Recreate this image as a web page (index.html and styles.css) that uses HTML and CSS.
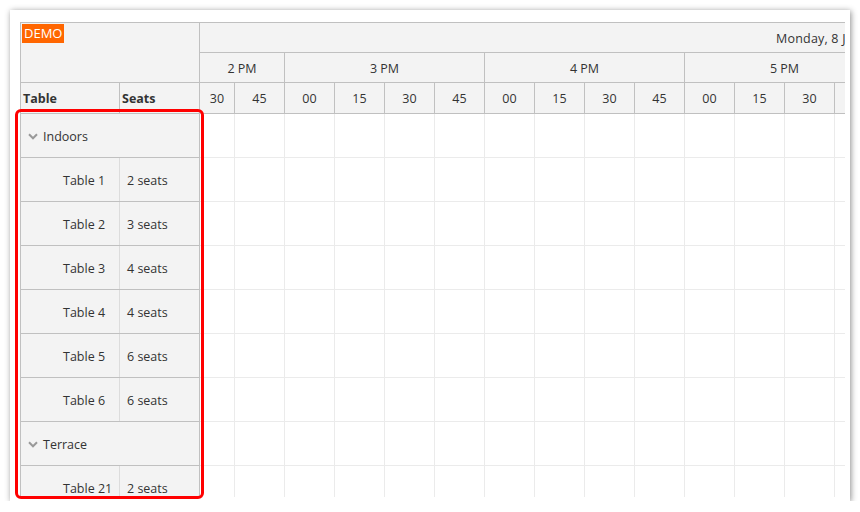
FILE: index.html
```html
<!DOCTYPE html>
<html>
<head>
<meta charset="utf-8">
<link rel="stylesheet" href="styles.css">
</head>
<body>
<div class="panel">
  <div class="scheduler">
    <div class="head">
      <div class="corner">
        <div class="corner-top"><span class="demo">DEMO</span></div>
        <div class="corner-cols">
          <div class="col-table">Table</div>
          <div class="col-seats">Seats</div>
        </div>
      </div>
      <div class="timeheader">
        <div class="date-row"><span class="date">Monday, 8 June 2020</span></div>
        <div class="hour-row">
          <div class="hour first">2 PM</div>
          <div class="hour">3 PM</div>
          <div class="hour">4 PM</div>
          <div class="hour">5 PM</div>
        </div>
        <div class="min-row">
          <div class="min first">30</div><div class="min">45</div>
          <div class="min">00</div><div class="min">15</div><div class="min">30</div><div class="min">45</div>
          <div class="min">00</div><div class="min">15</div><div class="min">30</div><div class="min">45</div>
          <div class="min">00</div><div class="min">15</div><div class="min">30</div><div class="min">45</div>
        </div>
      </div>
    </div>
    <div class="body">
      <div class="rowheaders">
        <div class="rh group"><svg class="chev" width="10" height="7" viewBox="0 0 10 7"><path d="M1 1.3 L5 5.3 L9 1.3" fill="none" stroke="#999" stroke-width="2"/></svg>Indoors</div>
        <div class="rh"><div class="c-table">Table 1</div><div class="c-seats">2 seats</div></div>
        <div class="rh"><div class="c-table">Table 2</div><div class="c-seats">3 seats</div></div>
        <div class="rh"><div class="c-table">Table 3</div><div class="c-seats">4 seats</div></div>
        <div class="rh"><div class="c-table">Table 4</div><div class="c-seats">4 seats</div></div>
        <div class="rh"><div class="c-table">Table 5</div><div class="c-seats">6 seats</div></div>
        <div class="rh"><div class="c-table">Table 6</div><div class="c-seats">6 seats</div></div>
        <div class="rh group"><svg class="chev" width="10" height="7" viewBox="0 0 10 7"><path d="M1 1.3 L5 5.3 L9 1.3" fill="none" stroke="#999" stroke-width="2"/></svg>Terrace</div>
        <div class="rh"><div class="c-table">Table 21</div><div class="c-seats">2 seats</div></div>
      </div>
      <div class="grid">
        <div class="grow"><div class="cell first"></div><div class="cell"></div><div class="cell"></div><div class="cell"></div><div class="cell"></div><div class="cell"></div><div class="cell"></div><div class="cell"></div><div class="cell"></div><div class="cell"></div><div class="cell"></div><div class="cell"></div><div class="cell"></div><div class="cell"></div></div>
        <div class="grow"><div class="cell first"></div><div class="cell"></div><div class="cell"></div><div class="cell"></div><div class="cell"></div><div class="cell"></div><div class="cell"></div><div class="cell"></div><div class="cell"></div><div class="cell"></div><div class="cell"></div><div class="cell"></div><div class="cell"></div><div class="cell"></div></div>
        <div class="grow"><div class="cell first"></div><div class="cell"></div><div class="cell"></div><div class="cell"></div><div class="cell"></div><div class="cell"></div><div class="cell"></div><div class="cell"></div><div class="cell"></div><div class="cell"></div><div class="cell"></div><div class="cell"></div><div class="cell"></div><div class="cell"></div></div>
        <div class="grow"><div class="cell first"></div><div class="cell"></div><div class="cell"></div><div class="cell"></div><div class="cell"></div><div class="cell"></div><div class="cell"></div><div class="cell"></div><div class="cell"></div><div class="cell"></div><div class="cell"></div><div class="cell"></div><div class="cell"></div><div class="cell"></div></div>
        <div class="grow"><div class="cell first"></div><div class="cell"></div><div class="cell"></div><div class="cell"></div><div class="cell"></div><div class="cell"></div><div class="cell"></div><div class="cell"></div><div class="cell"></div><div class="cell"></div><div class="cell"></div><div class="cell"></div><div class="cell"></div><div class="cell"></div></div>
        <div class="grow"><div class="cell first"></div><div class="cell"></div><div class="cell"></div><div class="cell"></div><div class="cell"></div><div class="cell"></div><div class="cell"></div><div class="cell"></div><div class="cell"></div><div class="cell"></div><div class="cell"></div><div class="cell"></div><div class="cell"></div><div class="cell"></div></div>
        <div class="grow"><div class="cell first"></div><div class="cell"></div><div class="cell"></div><div class="cell"></div><div class="cell"></div><div class="cell"></div><div class="cell"></div><div class="cell"></div><div class="cell"></div><div class="cell"></div><div class="cell"></div><div class="cell"></div><div class="cell"></div><div class="cell"></div></div>
        <div class="grow"><div class="cell first"></div><div class="cell"></div><div class="cell"></div><div class="cell"></div><div class="cell"></div><div class="cell"></div><div class="cell"></div><div class="cell"></div><div class="cell"></div><div class="cell"></div><div class="cell"></div><div class="cell"></div><div class="cell"></div><div class="cell"></div></div>
        <div class="grow"><div class="cell first"></div><div class="cell"></div><div class="cell"></div><div class="cell"></div><div class="cell"></div><div class="cell"></div><div class="cell"></div><div class="cell"></div><div class="cell"></div><div class="cell"></div><div class="cell"></div><div class="cell"></div><div class="cell"></div><div class="cell"></div></div>
      </div>
    </div>
  </div>
  <div class="highlight"></div>
</div>
</body>
</html>
```
FILE: styles.css
```css
* { box-sizing: border-box; }
html, body { margin: 0; padding: 0; background: #fff; }
body {
  font-family: "Open Sans", "Noto Sans", sans-serif;
  font-size: 12.5px;
  color: #333;
}
.panel {
  position: relative;
  margin: 10px 0 0 10px;
  width: 840px;
  height: 491px;
  background: #fff;
  box-shadow: 1px 1px 6px rgba(0,0,0,0.45);
  padding: 12px 5px 4px 10px;
}
.scheduler {
  width: 825px;
  height: 475px;
  overflow: hidden;
  border-top: 1px solid #c0c0c0;
  border-left: 1px solid #c0c0c0;
}
.head { display: flex; height: 91px; }
.corner {
  width: 179px;
  flex: none;
  background: #f3f3f3;
  border-right: 1px solid #c0c0c0;
}
.corner-top {
  height: 60px;
  border-bottom: 1px solid #c0c0c0;
  padding: 1px 0 0 1px;
}
.demo {
  display: inline-block;
  background: #ff6600;
  color: #fff;
  font-size: 13px;
  line-height: 19px;
  padding: 0 2px 0 2px;
}
.corner-cols { display: flex; height: 31px; border-bottom: 1px solid #c0c0c0; }
.col-table, .col-seats {
  font-weight: bold;
  display: flex;
  align-items: center;
  padding-left: 2px;
  padding-top: 1px;
}
.col-table { width: 99px; border-right: 1px solid #c0c0c0; }
.col-seats { flex: 1; }
.timeheader { flex: 1; overflow: hidden; background: #f3f3f3; }
.date-row {
  height: 30px;
  border-bottom: 1px solid #c0c0c0;
  display: flex;
  align-items: center;
  padding-left: 576px;
  padding-top: 2px;
  white-space: nowrap;
  letter-spacing: 0.2px;
}
.hour-row, .min-row { display: flex; }
.hour-row { height: 30px; border-bottom: 1px solid #c0c0c0; }
.min-row { height: 31px; border-bottom: 1px solid #c0c0c0; }
.hour, .min {
  flex: none;
  display: flex;
  align-items: center;
  justify-content: center;
  border-right: 1px solid #c0c0c0;
}
.hour { width: 200px; padding-top: 2px; }
.hour.first { width: 85px; }
.min { width: 50px; padding-top: 1px; }
.min.first { width: 35px; }
.body { display: flex; }
.rowheaders {
  width: 179px;
  flex: none;
  background: #f3f3f3;
  border-right: 1px solid #c0c0c0;
}
.rh {
  height: 44px;
  border-bottom: 1px solid #c0c0c0;
  display: flex;
}
.rh.group { align-items: center; padding-left: 7px; padding-top: 2px; }
.chev { margin-right: 5px; margin-top: -1px; }
.c-table {
  width: 99px;
  border-right: 1px solid #dcdcdc;
  display: flex;
  align-items: center;
  padding-left: 42px;
  padding-top: 2px;
  white-space: nowrap;
}
.c-seats {
  flex: 1;
  display: flex;
  align-items: center;
  padding-left: 7px;
  padding-top: 2px;
}
.grid { flex: 1; overflow: hidden; }
.grow { display: flex; height: 44px; border-bottom: 1px solid #ebebeb; }
.cell { flex: none; width: 50px; border-right: 1px solid #ebebeb; }
.cell.first { width: 35px; }
.highlight {
  position: absolute;
  left: 5px;
  top: 99px;
  width: 189px;
  height: 390px;
  border: 3px solid #ff0000;
  border-radius: 6px;
}
```
